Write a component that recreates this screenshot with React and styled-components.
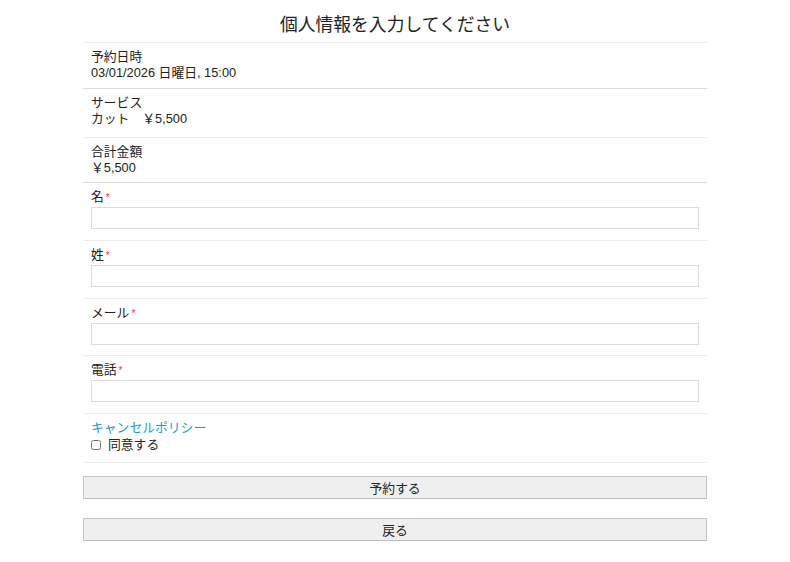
import React, { useState } from 'react';
import styled, { createGlobalStyle } from 'styled-components';

const GlobalStyle = createGlobalStyle`
  body {
    margin: 0;
    background: #fff;
    color: #222;
    font-family: "Liberation Sans", "Noto Sans CJK JP", sans-serif;
    font-size: 12.8px;
  }
`;

const Page = styled.div`
  width: 624px;
  margin: 0 auto;
`;

const Title = styled.h1`
  margin: 0;
  padding: 12px 0 4px;
  font-size: 17.8px;
  font-weight: normal;
  line-height: 26px;
  text-align: center;
  color: #222;
`;

const Row = styled.div`
  border-top: 1px solid ${(p) => (p.$strong ? '#dcdcdc' : '#ececec')};
  padding: ${(p) => (p.$field ? '6px 8px 11px' : '6px 8px 7px')};
  line-height: 16px;
`;

const Line = styled.div`
  height: 16px;
  line-height: 16px;
  white-space: nowrap;
`;

const Label = styled.label`
  display: block;
  height: 18px;
  line-height: 16px;
`;

const Required = styled.span`
  color: #e53935;
  font-size: 10px;
  margin-left: 2px;
`;

const Input = styled.input`
  display: block;
  box-sizing: border-box;
  width: 100%;
  height: 22px;
  margin: 0;
  border: 1px solid #dcdcdc;
  background: #fff;
  font: inherit;
  padding: 0 4px;
  outline: none;
`;

const PolicyLink = styled.a`
  display: block;
  height: 17px;
  color: #1a9bd4;
  text-decoration: none;
  line-height: 17px;
`;

const Agree = styled.label`
  display: flex;
  align-items: center;
  gap: 7px;
  height: 17px;
  line-height: 17px;
`;

const Check = styled.input`
  margin: 0;
  width: 10px;
  height: 10px;
`;

const Actions = styled.div`
  border-top: 1px solid #ececec;
  padding-top: 13px;
  display: flex;
  flex-direction: column;
  gap: 19px;
`;

const Button = styled.button`
  display: block;
  box-sizing: border-box;
  width: 100%;
  height: 23px;
  border: 1px solid #c4c4c4;
  border-bottom-color: #bcbcbc;
  background: #efefef;
  color: #222;
  font-family: "Liberation Sans", "Noto Sans CJK JP", sans-serif;
  font-size: 12.8px;
  cursor: pointer;
`;

const fields = [
  { id: 'first', label: '名' },
  { id: 'last', label: '姓' },
  { id: 'email', label: 'メール' },
  { id: 'phone', label: '電話' },
];

export default function App() {
  const [values, setValues] = useState({});
  const [agreed, setAgreed] = useState(false);

  return (
    <>
      <GlobalStyle />
      <Page>
        <Title>個人情報を入力してください</Title>
        <Row>
          <Line>予約日時</Line>
          <Line>03/01/2026 日曜日, 15:00</Line>
        </Row>
        <Row $strong style={{ paddingBottom: 10 }}>
          <Line>サービス</Line>
          <Line>カット　￥5,500</Line>
        </Row>
        <Row style={{ paddingBottom: 6 }}>
          <Line>合計金額</Line>
          <Line>￥5,500</Line>
        </Row>
        {fields.map((f, i) => (
          <Row
            key={f.id}
            $field
            $strong={i === 0}
            style={i === 2 ? { paddingBottom: 10 } : undefined}
          >
            <Label htmlFor={f.id}>
              {f.label}
              <Required>*</Required>
            </Label>
            <Input
              id={f.id}
              value={values[f.id] || ''}
              onChange={(e) => setValues({ ...values, [f.id]: e.target.value })}
            />
          </Row>
        ))}
        <Row style={{ paddingTop: 5, paddingBottom: 9 }}>
          <PolicyLink href="#">キャンセルポリシー</PolicyLink>
          <Agree>
            <Check type="checkbox" checked={agreed} onChange={(e) => setAgreed(e.target.checked)} />
            同意する
          </Agree>
        </Row>
        <Actions>
          <Button type="button">予約する</Button>
          <Button type="button">戻る</Button>
        </Actions>
      </Page>
    </>
  );
}
